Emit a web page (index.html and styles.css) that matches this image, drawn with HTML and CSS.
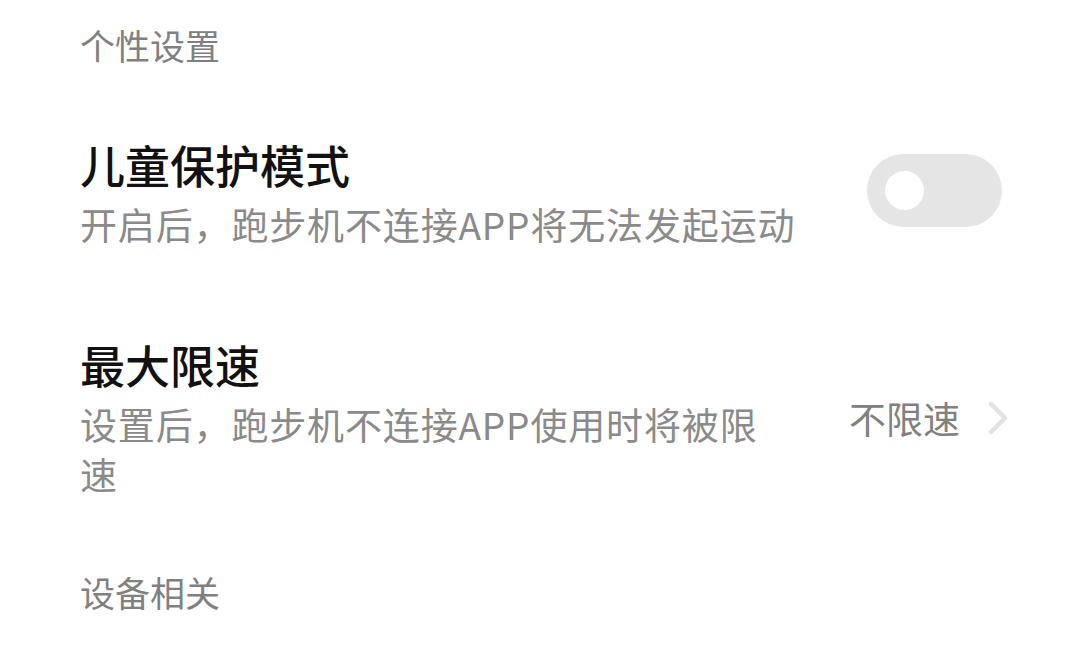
FILE: index.html
```html
<!DOCTYPE html>
<html lang="zh-CN">
<head>
<meta charset="utf-8">
<link rel="stylesheet" href="styles.css">
</head>
<body>
<div class="page">
  <div class="section-title first">个性设置</div>
  <div class="row">
    <div class="text">
      <div class="title">儿童保护模式</div>
      <div class="desc">开启后，跑步机不连接APP将无法发起运动</div>
    </div>
    <div class="switch"><div class="knob"></div></div>
  </div>
  <div class="row">
    <div class="text narrow">
      <div class="title">最大限速</div>
      <div class="desc">设置后，跑步机不连接APP使用时将被限速</div>
    </div>
    <div class="value">
      <span class="value-text">不限速</span>
      <svg class="chevron" width="22" height="34" viewBox="0 0 22 34"><path d="M3 3 L17 17 L3 31" fill="none" stroke="#e2e2e2" stroke-width="4.5" stroke-linecap="round" stroke-linejoin="round"/></svg>
    </div>
  </div>
  <div class="section-title">设备相关</div>
</div>
</body>
</html>
```

FILE: styles.css
```css
html, body {
  margin: 0;
  padding: 0;
  background: #ffffff;
}
body {
  font-family: "Noto Sans CJK SC", "Noto Sans", sans-serif;
  width: 1080px;
  height: 657px;
  overflow: hidden;
}
.page {
  padding: 0 78px 0 80px;
}
.section-title {
  font-size: 35px;
  line-height: 50px;
  color: #808080;
  padding: 22px 0 25px;
}
.section-title.first {
  padding-top: 20px;
}
.row {
  display: flex;
  align-items: center;
  padding: 42px 0 46px;
}
.text {
  flex: 1;
  min-width: 0;
}
.text.narrow {
  flex: 0 0 700px;
}
.title {
  font-size: 45px;
  line-height: 56px;
  font-weight: 500;
  color: #111111;
}
.desc {
  margin-top: 6px;
  font-size: 37px;
  line-height: 50px;
  letter-spacing: 0.85px;
  color: #8a8a8a;
}
.switch {
  width: 135px;
  height: 73px;
  border-radius: 37px;
  background: #e5e5e5;
  display: flex;
  align-items: center;
  padding-left: 18px;
  box-sizing: border-box;
  margin-top: -6px;
}
.knob {
  width: 39px;
  height: 39px;
  border-radius: 50%;
  background: #ffffff;
}
.value {
  margin-left: auto;
  display: flex;
  align-items: center;
  margin-right: -8px;
}
.value-text {
  font-size: 37px;
  line-height: 50px;
  color: #808080;
}
.chevron {
  margin-left: 28px;
  display: block;
}
```
